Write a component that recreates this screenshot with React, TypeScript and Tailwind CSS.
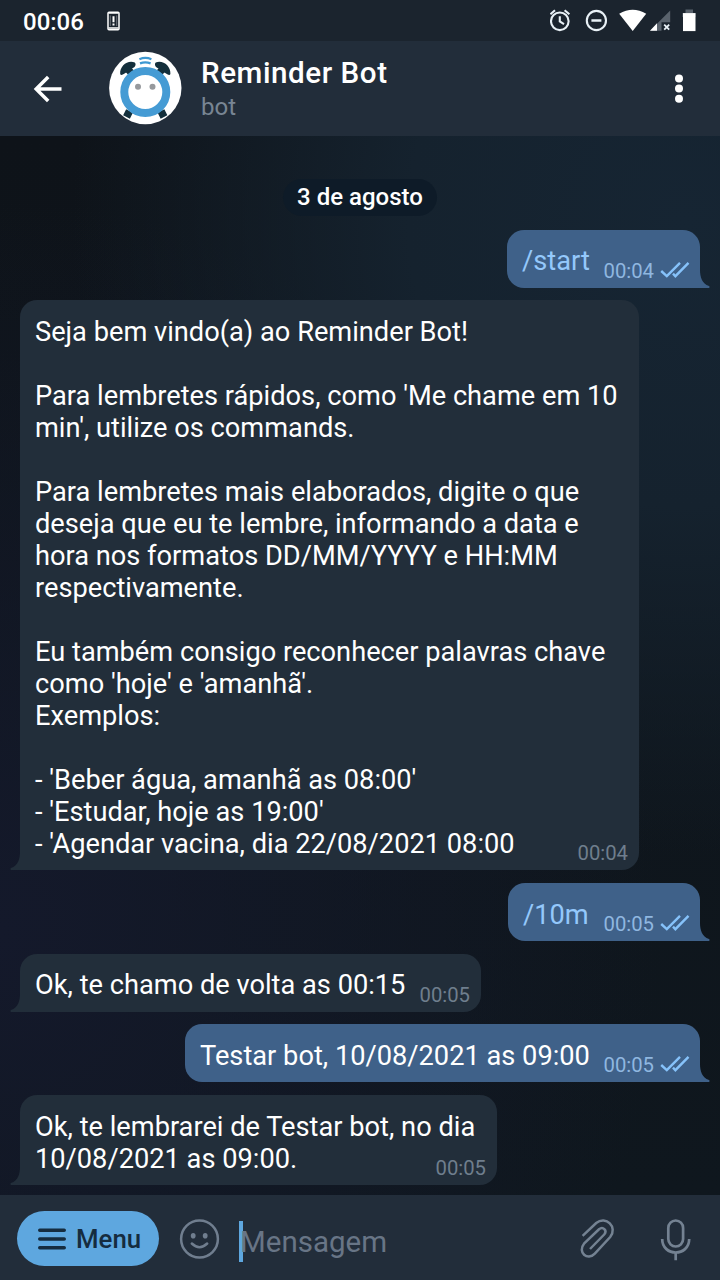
import type { ReactNode } from "react";

function Tail({ side }: { side: "in" | "out" }) {
  return side === "out" ? (
    <svg className="absolute -right-[11px] bottom-0 h-[18px] w-[12px]" viewBox="0 0 12 18" fill="#3f6189">
      <path d="M0 0H1C1 7 3 13.5 10 16Q11.5 17 10 18H0Z" />
    </svg>
  ) : (
    <svg className="absolute -left-[11px] bottom-0 h-[18px] w-[12px]" viewBox="0 0 12 18" fill="#222e3a">
      <path d="M12 0H11C11 7 9 13.5 2 16Q.5 17 2 18H12Z" />
    </svg>
  );
}

function Checks() {
  return (
    <svg className="mb-[9px] ml-[6px] h-[18px] w-[30px]" viewBox="0 0 30 18" fill="none" stroke="#86c2fa" strokeWidth="2.4">
      <path d="M1.2 10L6.8 15.2L20 1.8M13 12.6L15.4 15.2L28.5 1.8" />
    </svg>
  );
}

function Bubble({ side, time, className, children }: { side: "in" | "out"; time: string; className: string; children: ReactNode }) {
  const out = side === "out";
  return (
    <div
      className={`relative whitespace-pre pl-[15px] text-[27.23px] leading-[32px] text-white ${
        out
          ? "mr-[20px] self-end rounded-[17px] rounded-br-none bg-[#3f6189]"
          : "ml-[20px] self-start rounded-[17px] rounded-bl-none bg-[#222e3a]"
      } ${className}`}
    >
      <div className="w-fit">{children}</div>
      <div className={`absolute bottom-0 flex items-end ${out ? "right-[10px]" : "right-[11px]"}`}>
        <span className={`mb-[5px] text-[20.3px] leading-[24px] ${out ? "text-[#8fb7e0]" : "text-[#6f7e8d]"}`}>{time}</span>
        {out && <Checks />}
      </div>
      <Tail side={side} />
    </div>
  );
}

const welcome = [
  "Seja bem vindo(a) ao Reminder Bot!",
  "",
  "Para lembretes rápidos, como 'Me chame em 10",
  "min', utilize os commands.",
  "",
  "Para lembretes mais elaborados, digite o que",
  "deseja que eu te lembre, informando a data e",
  "hora nos formatos DD/MM/YYYY e HH:MM",
  "respectivamente.",
  "",
  "Eu também consigo reconhecer palavras chave",
  "como 'hoje' e 'amanhã'.",
  "Exemplos:",
  "",
  "- 'Beber água, amanhã as 08:00'",
  "- 'Estudar, hoje as 19:00'",
  "- 'Agendar vacina, dia 22/08/2021 08:00",
];

function Lines({ lines }: { lines: string[] }) {
  return lines.map((line, i) => (
    <p key={i} className="h-[32px] w-fit">
      {line}
    </p>
  ));
}

function StatusBar() {
  return (
    <div className="flex h-[41px] items-center justify-between bg-[#1b242e] text-white">
      <div className="flex items-center pl-[23px]">
        <span className="mt-[2px] text-[24px] leading-[28px] font-medium">00:06</span>
        <svg className="ml-[23px] h-[20px] w-[13px]" viewBox="0 0 13 20" fill="none" stroke="#fff">
          <rect x="1" y="1.2" width="11" height="17.6" rx="1" strokeWidth="1.5" />
          <path d="M1.5 2.2h10M1.5 17h10" strokeWidth="1.3" />
          <path d="M3.3 4.5v10.5M9.7 4.5v10.5" strokeWidth=".7" opacity=".5" />
          <path d="M6.5 5.2v6M6.5 12.6v2" strokeWidth="2" />
        </svg>
      </div>
      <svg className="h-[41px] w-[170px]" viewBox="550 0 170 41" fill="none" stroke="#e9f1f6" strokeWidth="2.1">
        <circle cx="559.8" cy="21.3" r="8.8" />
        <path d="M559.8 16.3v5.2l4.2 2.6M550.4 14.2l4.6-4M564.6 10.2l4.8 4" />
        <circle cx="596.4" cy="20.5" r="9.6" />
        <path d="M591.4 20.5h10" strokeWidth="2.5" />
        <path d="M619.2 13.7Q632.7 5.8 646.2 13.7L632.7 31Z" fill="#fff" stroke="none" />
        <path d="M650 30.8L670.2 10.5V22.2H661.5V30.8Z" fill="#59626c" stroke="none" />
        <path d="M650 30.8l7-7.5v7.5Z" fill="#fff" stroke="none" />
        <path d="M664.2 24.7l5 5M669.2 24.7l-5 5" strokeWidth="1.8" />
        <path d="M685.5 9.4h7.5V13h2.5v4h-13v-4h3Z" fill="#59626c" stroke="none" />
        <path d="M683 13.1h12.5v18H683Z" fill="#fff" stroke="none" />
      </svg>
    </div>
  );
}

function Avatar() {
  return (
    <svg className="h-[74px] w-[74px]" viewBox="108 51 74 74" fill="none">
      <circle cx="145.3" cy="88" r="36.2" fill="#fff" />
      <path d="M129.5 111l-3 6M161 111l3 6" stroke="#142f3c" strokeWidth="7.5" />
      <path d="M127.5 69l6 6M163 69l-6 6" stroke="#142f3c" strokeWidth="7" />
      <path d="M120.2 74C119.5 66 128 59.5 134.8 62.6Q136.5 64.5 134.5 67L124.6 73.5Q121 76 120.2 74ZM170.4 74C171 66 162.5 59.5 155.7 62.6Q154 64.5 156 67L166 73.5Q169.5 76 170.4 74Z" fill="#142f3c" />
      <circle cx="145.3" cy="92" r="21" fill="#fff" stroke="#459bd4" strokeWidth="8" />
      <path d="M139.4 59.2q6-2.6 12 0M140 63.4q5.3-2 10.6 0" stroke="#3d98d2" strokeWidth="2.2" />
      <circle cx="138" cy="86.8" r="3" fill="#96999d" />
      <circle cx="152.5" cy="86.8" r="3" fill="#96999d" />
    </svg>
  );
}

function Header() {
  return (
    <header className="flex h-[95px] items-center bg-[#222d3a]">
      <svg className="ml-[32px] h-[30px] w-[32px]" viewBox="0 0 32 30" fill="none" stroke="#fff" strokeWidth="3.5">
        <path d="M29.5 15H4M16.2 3L4.2 15l12 12" />
      </svg>
      <div className="ml-[44px] -mt-px h-[74px]">
        <Avatar />
      </div>
      <div className="ml-[19px] flex flex-col">
        <h1 className="text-[29.6px] leading-[32px] font-medium tracking-[0.55px] text-white">Reminder Bot</h1>
        <p className="mt-[4px] text-[24px] leading-[28px] text-[#788593]">bot</p>
      </div>
      <svg className="ml-auto mr-[36px] h-[30px] w-[10px]" viewBox="0 0 10 30" fill="#fff">
        <circle cx="5" cy="4.5" r="4" />
        <circle cx="5" cy="14.5" r="4" />
        <circle cx="5" cy="24.7" r="4" />
      </svg>
    </header>
  );
}

function Composer() {
  return (
    <footer className="flex h-[85px] items-center bg-[#222d3a]">
      <button className="mt-[2px] ml-[17px] flex h-[55px] w-[142px] items-center rounded-full bg-[#5ea7df] pl-[21px] text-[#152c3f]">
        <svg className="h-[22px] w-[28px]" viewBox="0 0 28 22" stroke="currentColor" strokeWidth="3.6" strokeLinecap="round">
          <path d="M1.8 2.2h24.4M1.8 11h24.4M1.8 19.8h24.4" />
        </svg>
        <span className="ml-[10px] text-[25.8px] leading-[32px] font-medium">Menu</span>
      </button>
      <svg className="mt-[2px] ml-[20px] h-[42px] w-[42px]" viewBox="0 0 42 42" fill="none" stroke="#707e8f" strokeWidth="2.5">
        <circle cx="20.5" cy="21" r="18.4" />
        <path d="M12.8 25.5q7.7 7.4 15.4 0" strokeLinecap="round" />
        <ellipse cx="14.2" cy="17.8" rx="2.4" ry="2.8" fill="#707e8f" stroke="none" />
        <ellipse cx="26.2" cy="17.8" rx="2.4" ry="2.8" fill="#707e8f" stroke="none" />
      </svg>
      <div className="ml-[18px] flex items-center">
        <span className="mt-[7px] h-[41px] w-[4px] bg-[#5ea7df]" />
        <span className="mt-[9px] -ml-[3px] text-[29.5px] leading-[34px] text-[#687586]">Mensagem</span>
      </div>
      <svg className="mt-[2px] ml-auto h-[42px] w-[38px]" viewBox="578 1218 38 42" fill="none" stroke="#748292" strokeWidth="2.5">
        <path d="M582.6 1235.8L596.2 1223C606 1215.5 618 1227 610.2 1237L594.8 1253.6C587.5 1261.5 577.2 1252 584 1243.7L599 1229.3C603 1226 607.6 1230.5 604.2 1234.5L590 1249" />
      </svg>
      <svg className="mt-[2px] mr-[27px] ml-[43px] h-[44px] w-[34px]" viewBox="659 1216 34 44" fill="none" stroke="#748292" strokeWidth="2.7">
        <rect x="668.3" y="1219.5" width="14.8" height="26" rx="7.4" />
        <path d="M662.2 1238c0 18 27 18 27 0M675.7 1251.5v7.8" />
      </svg>
    </footer>
  );
}

export default function App() {
  return (
    <div className="flex h-[1280px] w-[720px] flex-col overflow-hidden font-['Roboto',sans-serif]">
      <StatusBar />
      <Header />
      <main className="flex h-[1059px] flex-col bg-[radial-gradient(ellipse_85%_60%_at_95%_8%,#162533_0%,#15222e_45%,transparent_100%),radial-gradient(ellipse_at_0%_75%,#14192b_0%,transparent_65%),linear-gradient(#0e1319,#0f171e)]">
        <div className="mt-[43px] flex h-[37px] w-[154px] items-center justify-center self-center rounded-full bg-[#0e1b28] text-[24px] font-medium text-white">
          <span className="-mt-px">3 de agosto</span>
        </div>
        <Bubble side="out" time="00:04" className="mt-[14px] h-[58px] w-[193px] pt-[15px]">
          <span className="text-[#94c8fb]">/start</span>
        </Bubble>
        <Bubble side="in" time="00:04" className="mt-[12px] h-[570px] w-[619px] pt-[16px]">
          <Lines lines={welcome} />
        </Bubble>
        <Bubble side="out" time="00:05" className="mt-[13px] h-[58px] w-[192px] pt-[16px]">
          <span className="text-[#94c8fb]">/10m</span>
        </Bubble>
        <Bubble side="in" time="00:05" className="mt-[13px] h-[58px] w-[461px] pt-[15px]">
          Ok, te chamo de volta as 00:15
        </Bubble>
        <Bubble side="out" time="00:05" className="mt-[12px] h-[58px] w-[515px] pt-[16px]">
          Testar bot, 10/08/2021 as 09:00
        </Bubble>
        <Bubble side="in" time="00:05" className="mt-[13px] h-[90px] w-[477px] pt-[16px]">
          <Lines lines={["Ok, te lembrarei de Testar bot, no dia", "10/08/2021 as 09:00."]} />
        </Bubble>
      </main>
      <Composer />
    </div>
  );
}
